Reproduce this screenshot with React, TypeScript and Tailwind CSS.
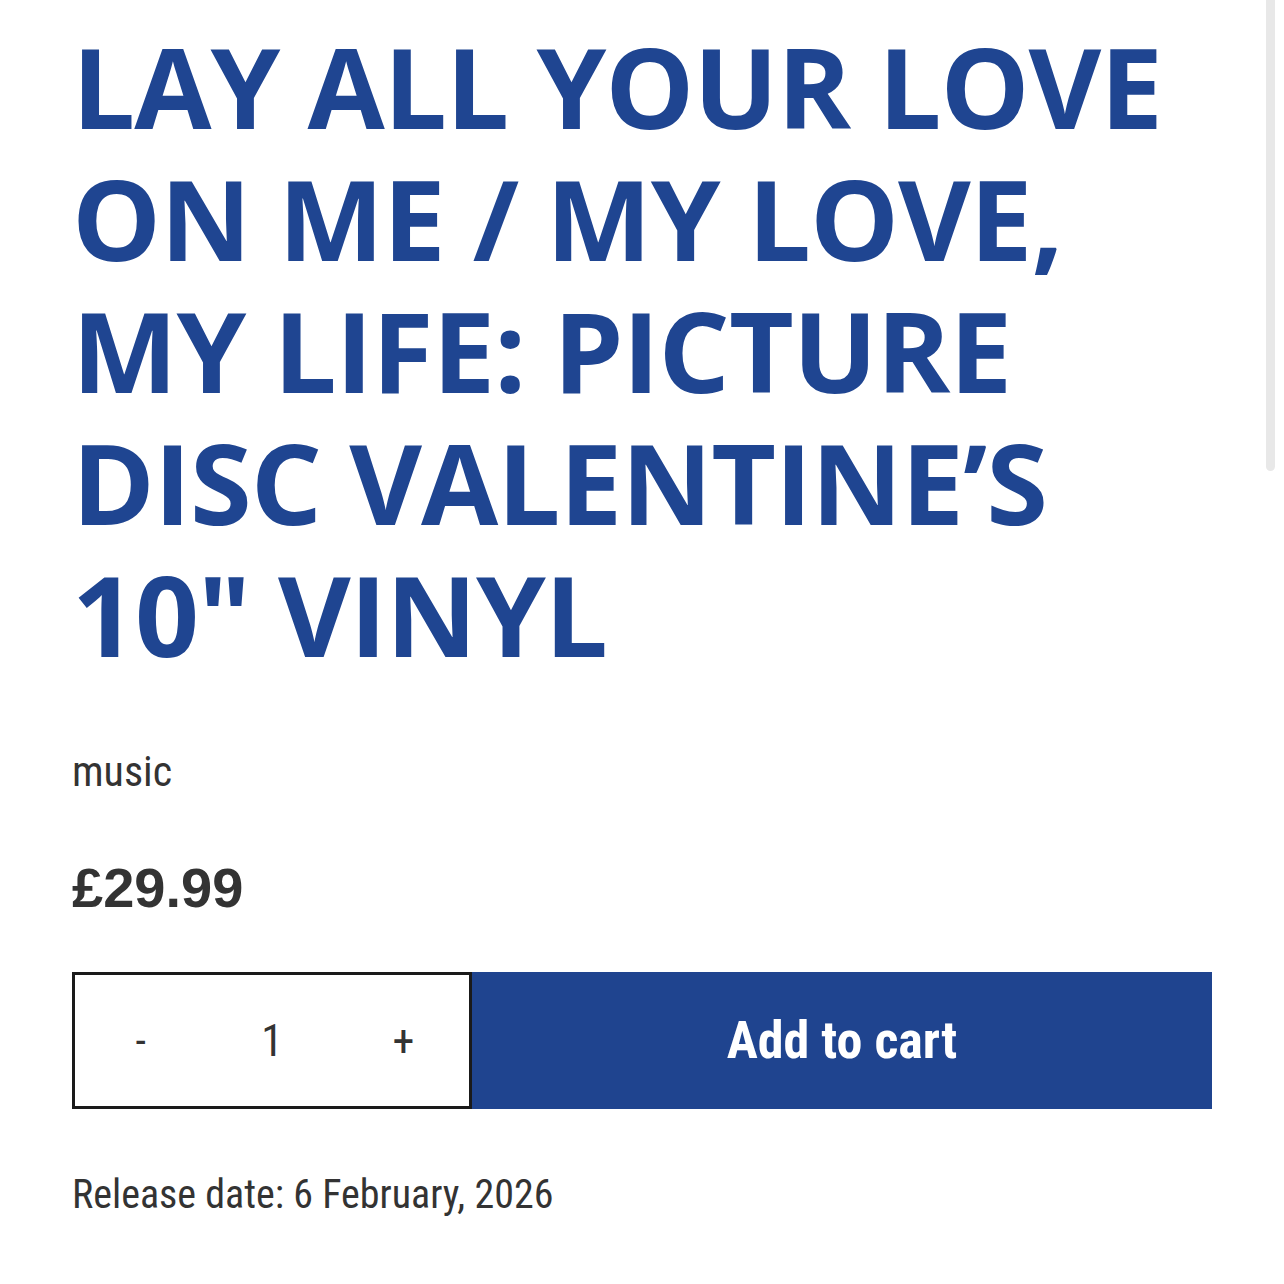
import { useState } from "react";

const condensed = {
  fontFamily: '"Liberation Sans Narrow", "Roboto Condensed", "DejaVu Sans Condensed", "Liberation Sans", sans-serif',
};

export default function App() {
  const [qty, setQty] = useState(1);

  return (
    <div className="min-h-screen bg-white relative">
      {/* overlay scrollbar */}
      <div className="fixed top-0 right-[9px] w-[9px] h-[471px] rounded-b-full bg-[#e8e8e8] pointer-events-none" />

      <div className="px-[72px] pt-[20px]">
        <h1
          className="text-[112px] leading-[132px] font-bold text-[#1f4591] uppercase tracking-[-1px]"
          style={{ fontFamily: '"Open Sans", "Noto Sans", sans-serif' }}
        >
          Lay all your love on me / My love, my life: Picture disc Valentine’s 10" vinyl
        </h1>

        <p className="mt-[67px] text-[42px] leading-[50px] text-[#333333]" style={condensed}>
          music
        </p>

        <p
          className="mt-[59px] text-[56px] leading-[64px] font-bold text-[#333333]"
          style={{ fontFamily: '"Liberation Sans", Arial, sans-serif' }}
        >
          £29.99
        </p>

        <div className="mt-[52px] flex h-[137px]">
          <div className="w-[400px] grid grid-cols-3 border-[3px] border-[#1a1a1a] text-[#333333]" style={condensed}>
            <button
              className="flex items-center justify-center text-[42px]"
              onClick={() => setQty(Math.max(1, qty - 1))}
            >
              -
            </button>
            <div className="flex items-center justify-center text-[44px]">{qty}</div>
            <button className="flex items-center justify-center text-[44px]" onClick={() => setQty(qty + 1)}>
              +
            </button>
          </div>
          <button className="flex-1 bg-[#1f448f] text-white text-[52px] font-bold" style={condensed}>
            Add to cart
          </button>
        </div>

        <p className="mt-[62px] text-[40px] leading-[48px] text-[#333333]" style={condensed}>
          Release date: 6 February, 2026
        </p>
      </div>
    </div>
  );
}
